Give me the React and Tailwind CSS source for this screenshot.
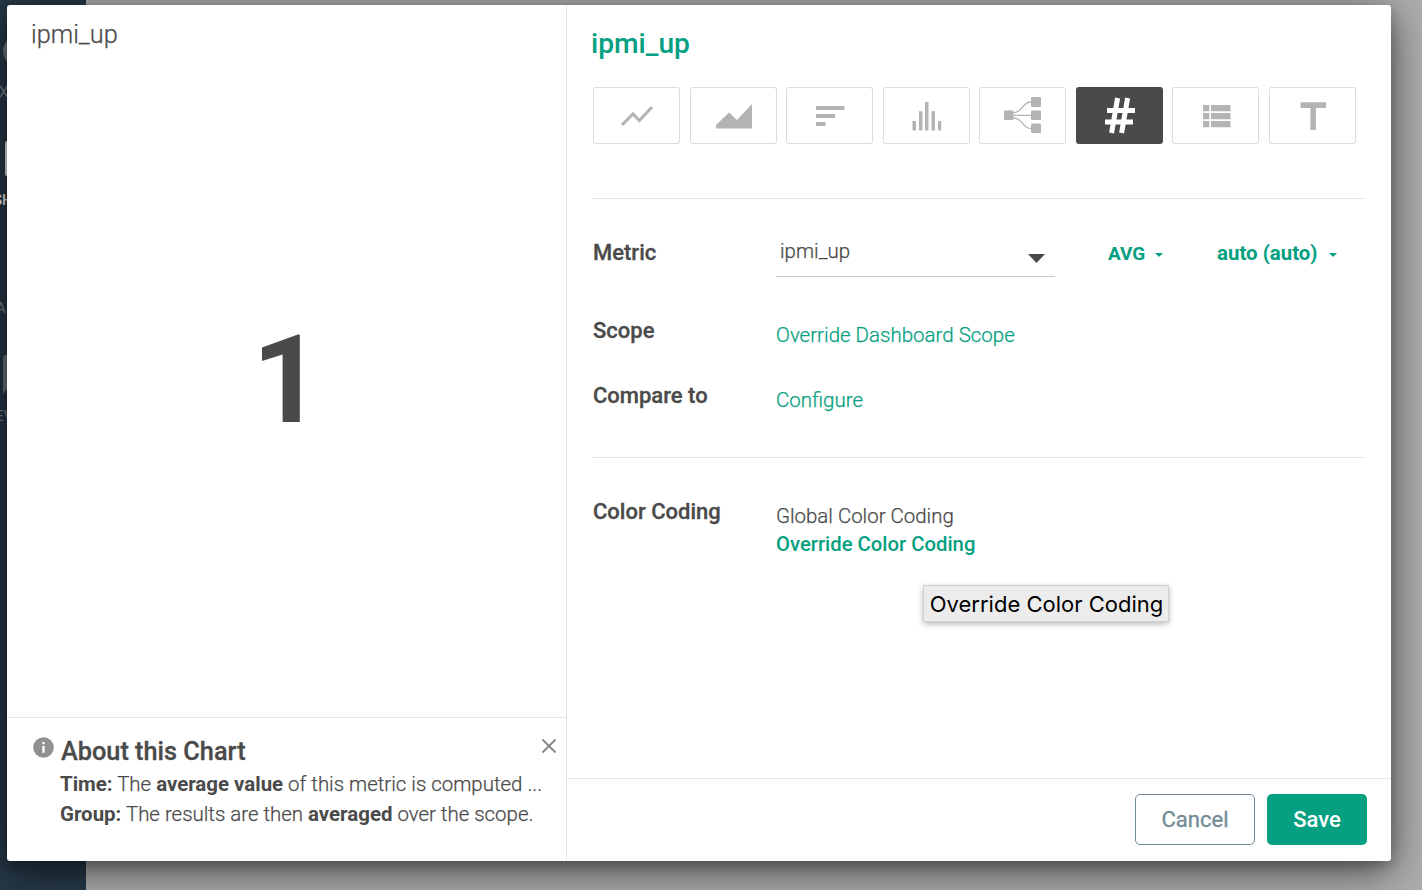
import React from "react";

function ChartTypeIcon({ type }) {
  switch (type) {
    case "line":
      return (
        <svg width="87" height="57" viewBox="0 0 87 57" fill="none" stroke="#b3b3b3" strokeWidth="3">
          <path d="M29 38 L40 27 L46.300 33.500 L59 20" />
        </svg>
      );
    case "area":
      return (
        <svg width="87" height="57" viewBox="0 0 87 57" fill="#b3b3b3">
          <path d="M26 41.500V38L39 25.500L47 33L62 17V41.500Z" />
        </svg>
      );
    case "toplist":
      return (
        <svg width="87" height="57" viewBox="0 0 87 57" fill="#b3b3b3">
          <path d="M30 19h28.500v4H30zM30 27h19v4H30zM30 35h9.500v4H30z" />
        </svg>
      );
    case "histogram":
      return (
        <svg width="87" height="57" viewBox="0 0 87 57" fill="#b3b3b3">
          <path d="M29.500 34h3.500v9.500h-3.500zM36 24.300h3.500v19.200h-3.500zM42 15h3.500v28.500H42zM48.500 24.300H52v19.200h-3.500zM55 34h3.200v9.500H55z" />
        </svg>
      );
    case "topology":
      return (
        <svg width="87" height="57" viewBox="0 0 87 57" fill="#b3b3b3">
          <rect x="25" y="23.500" width="9.500" height="9.500" rx="1" />
          <rect x="52" y="10" width="10" height="10" rx="1" />
          <rect x="52" y="23.500" width="10" height="9.500" rx="1" />
          <rect x="52" y="36.500" width="10" height="9.500" rx="1" />
          <path d="M34 25.800C44 25.800 43 15 52 15M34 28.300H52M34 30.800C44 30.800 43 41.600 52 41.600" fill="none" stroke="#b3b3b3" strokeWidth="1.300" />
        </svg>
      );
    case "number":
      return (
        <svg width="87" height="57" viewBox="0 0 87 57" fill="none" stroke="#fff" strokeWidth="5">
          <path d="M41.600 11L35.600 46M51.600 11L45.600 46M31 23.500H59M29 35H57" />
        </svg>
      );
    case "table":
      return (
        <svg width="87" height="57" viewBox="0 0 87 57" fill="#b3b3b3">
          <path d="M31 18h6.300v6.200H31zM39 18h19.500v6.200H39zM31 26h6.300v6.200H31zM39 26h19.500v6.200H39zM31 34h6.300v6.200H31zM39 34h19.500v6.200H39z" />
        </svg>
      );
    default:
      return (
        <svg width="87" height="57" viewBox="0 0 87 57" fill="#b3b3b3">
          <path d="M31.500 15.300H57V21H46.900V43H41.400V21H31.500z" />
        </svg>
      );
  }
}

const chartTypes = ["line", "area", "toplist", "histogram", "topology", "number", "table", "text"];

function ChartTypes() {
  return (
    <div className="flex h-[57px] w-[763px] gap-[9.550px]">
      {chartTypes.map((type) => (
        <button
          key={type}
          className={
            type === "number"
              ? "flex h-[57px] w-[87px] shrink-0 items-center justify-center rounded-[3px] bg-[#4a4a4a]"
              : "flex h-[57px] w-[87px] shrink-0 items-center justify-center rounded-[3px] bg-white shadow-[inset_0_0_0_1px_#dcdcdc]"
          }
        >
          <ChartTypeIcon type={type} />
        </button>
      ))}
    </div>
  );
}

function Sidebar() {
  return (
    <div className="relative h-full w-[86px] overflow-hidden bg-[#263847] text-[15px] leading-[20px] text-[#7b868e]">
      <svg className="absolute left-0 top-0" width="86" height="890" viewBox="0 0 86 890">
        <circle cx="19" cy="51" r="16" fill="#6d7a84" />
        <rect x="5" y="141" width="30" height="35" rx="2" fill="#f0f0f0" />
        <path d="M3 394V358q0-3 3-3h24v32H9z" fill="#6d7a84" />
      </svg>
      <div className="flex flex-col gap-[88px] pt-[82px]">
        <span className="-ml-[1px]">X</span>
        <span className="-ml-[7px] font-medium text-[#f4f4f4]">SH</span>
        <span className="-ml-[4px]">A</span>
        <span className="-ml-[5px]">EV</span>
      </div>
    </div>
  );
}

function Preview() {
  return (
    <section className="flex w-[560px] shrink-0 flex-col border-r border-[#dfe8e8]">
      <h2 className="pl-[24px] pt-[14px] text-[25.300px] font-light leading-[32px] [-webkit-text-stroke:0.25px]">ipmi_up</h2>
      <div className="flex flex-1 items-center justify-center pb-[7px] pl-[1px] text-[122px] font-bold leading-none">
        1
      </div>
      <div className="h-[144px] border-t border-[#dfe8e8] pl-[26px] pt-[18px]">
        <div className="flex items-start">
          <svg width="21" height="21" viewBox="0 0 21 21" className="mt-[1px] shrink-0">
            <circle cx="10.500" cy="10.500" r="10.300" fill="#919191" />
            <path d="M9.300 5h2.400v2.300H9.300zM9.300 9h2.400v6.700H9.300z" fill="#fff" />
          </svg>
          <h3 className="ml-[7px] text-[25.300px] font-medium leading-[32px] [-webkit-text-stroke:0.3px]">About this Chart</h3>
          <svg width="16" height="16" viewBox="0 0 16 16" className="ml-auto mr-[9px] mt-[2px]" fill="none" stroke="#858585" strokeWidth="1.800">
            <path d="M1.500 1.500l13 13M14.500 1.500l-13 13" />
          </svg>
        </div>
        <div className="ml-[27px] whitespace-nowrap pt-[1px] text-[20.450px] font-light leading-[30px] [-webkit-text-stroke:0.25px]">
          <p>
            <b className="font-bold [-webkit-text-stroke:0px]">Time:</b> The{" "}
            <b className="font-bold [-webkit-text-stroke:0px]">average value</b> of this metric is computed ...
          </p>
          <p>
            <b className="font-bold [-webkit-text-stroke:0px]">Group:</b> The results are then{" "}
            <b className="font-bold [-webkit-text-stroke:0px]">averaged</b> over the scope.
          </p>
        </div>
      </div>
    </section>
  );
}

function Caret() {
  return (
    <svg width="8" height="4" viewBox="0 0 8 4" className="mt-[2px]" fill="#05a081">
      <path d="M0 0h8L4 4z" />
    </svg>
  );
}

function Label({ children }) {
  return (
    <div className="w-[183px] pt-[1px] text-[22px] font-medium leading-[34px] [-webkit-text-stroke:0.3px]">{children}</div>
  );
}

function Settings() {
  return (
    <section className="flex flex-1 flex-col">
      <div className="relative flex-1 px-[26px]">
        <h1 className="-ml-[2px] pt-[22px] text-[28.200px] font-medium leading-[34px] text-[#05a081]">ipmi_up</h1>
        <div className="mt-[26px]">
          <ChartTypes />
        </div>
        <div className="mt-[54px] h-px bg-[#dfe8e8]" />

        <div className="mt-[37px] flex h-[41px]">
          <div className="w-[183px] text-[22px] font-medium leading-[34px] [-webkit-text-stroke:0.3px]">Metric</div>
          <div className="flex w-[279px] justify-between border-b border-[#c8c8c8] pl-[4px] text-[20.450px] font-light leading-[31px] [-webkit-text-stroke:0.25px]">
            <span>ipmi_up</span>
            <svg width="17" height="9" viewBox="0 0 17 9" className="mr-[10px] mt-[18px]" fill="#4a4a4a">
              <path d="M0 0h17L8.500 9z" />
            </svg>
          </div>
          <div className="ml-[53px] flex w-[109px] items-center gap-[10px] pb-[5px] text-[19px] font-bold text-[#05a081]">
            AVG <Caret />
          </div>
          <div className="flex items-center gap-[11px] pb-[7px] text-[20.450px] font-bold text-[#05a081]">
            <span>auto (auto)</span>
            <span className="pt-[2px]"><Caret /></span>
          </div>
        </div>

        <div className="mt-[36px] flex h-[65px]">
          <Label>Scope</Label>
          <div className="pt-[8px] text-[20.500px] font-light leading-[28px] text-[#05a081] [-webkit-text-stroke:0.25px]">Override Dashboard Scope</div>
        </div>
        <div className="flex h-[79px]">
          <Label>Compare to</Label>
          <div className="pt-[8px] text-[20.500px] font-light leading-[28px] text-[#05a081] [-webkit-text-stroke:0.25px]">Configure</div>
        </div>
        <div className="h-px bg-[#dfe4e4]" />
        <div className="mt-[36px] flex">
          <Label>Color Coding</Label>
          <div className="pt-[8px] text-[20.450px] font-light leading-[28px]">
            <div className="[-webkit-text-stroke:0.25px]">Global Color Coding</div>
            <div className="text-[20.300px] font-medium text-[#05a081]">Override Color Coding</div>
          </div>
        </div>

        <div className="absolute left-[356px] top-[580px] flex h-[37px] w-[246px] items-center justify-center whitespace-nowrap border border-[#d0d0d0] bg-[#ececec] pl-[1px] pt-[2px] font-[Inter,sans-serif] text-[22px] text-black shadow-[0_2px_6px_rgba(0,0,0,0.28)]">
          Override Color Coding
        </div>
      </div>
      <footer className="flex h-[83px] justify-end gap-[12px] border-t border-[#e4e8e8] pr-[24px] pt-[15px] text-[22px]">
        <button className="h-[51px] w-[120px] rounded-[5px] border border-[#728b96] text-[#728b96] [-webkit-text-stroke:0.3px]">Cancel</button>
        <button className="h-[51px] w-[100px] rounded-[5px] bg-[#05a081] font-medium text-white">Save</button>
      </footer>
    </section>
  );
}

export default function App() {
  return (
    <div className="relative h-[890px] w-[1422px] overflow-hidden bg-[#adadad] font-[Roboto,sans-serif] text-[#4a4a4a]">
      <Sidebar />
      <div
        role="dialog"
        className="absolute left-[7px] top-[5px] flex h-[856px] w-[1384px] rounded-[3px] bg-white shadow-[0_10px_40px_rgba(0,0,0,0.6),0_4px_12px_rgba(0,0,0,0.2)]"
      >
        <Preview />
        <Settings />
      </div>
    </div>
  );
}
